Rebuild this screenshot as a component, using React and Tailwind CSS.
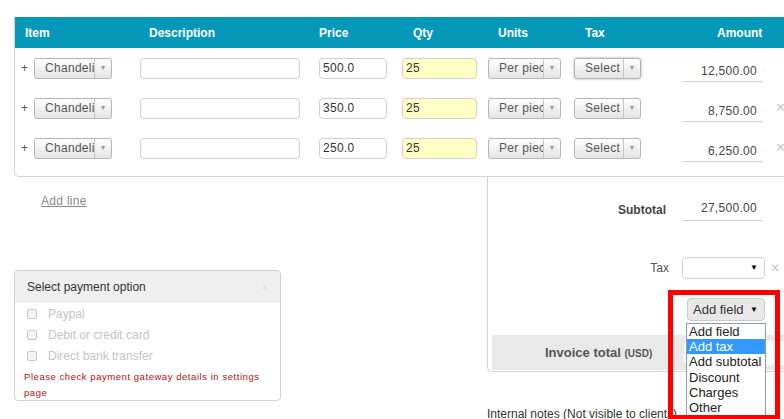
import React from "react";

const font = { fontFamily: '"Liberation Sans", Arial, sans-serif' };

function Combo({ label, width, focus }) {
  return (
    <div
      className={`flex h-[21px] flex-none items-stretch overflow-hidden rounded-[3px] border border-[#b4b4b4] bg-gradient-to-b from-white to-[#e4e4e4] ${width} ${focus ? "shadow-[0_0_3px_rgba(0,0,0,0.35)]" : ""}`}
    >
      <span className="flex-1 overflow-hidden whitespace-nowrap pl-[10px] text-[12px] leading-[19px] tracking-[0.3px] text-[#555]">{label}</span>
      <span className="flex w-[17px] flex-none items-center justify-center border-l border-[#c4c4c4] text-[7px] text-[#999]">▼</span>
    </div>
  );
}

function Field({ value, width, yellow }) {
  return (
    <div
      className={`h-[21px] flex-none rounded-[4px] border border-[#cfcfcf] pl-[3px] text-[12px] leading-[19px] tracking-[0.3px] text-[#333] ${width} ${yellow ? "bg-[#ffffc6]" : "bg-white"}`}
    >
      {value}
    </div>
  );
}

function Row({ price, amount, remove, focus }) {
  return (
    <div className="flex h-[40px] items-center">
      <span className="w-[19px] flex-none pl-[6px] text-[12px] text-[#555]">+</span>
      <Combo label="Chandeli" width="w-[78px]" />
      <div className="ml-[28px]"><Field value="" width="w-[160px]" /></div>
      <div className="ml-[19px]"><Field value={price} width="w-[68px]" /></div>
      <div className="ml-[15px]"><Field value="25" width="w-[75px]" yellow /></div>
      <div className="ml-[11px]"><Combo label="Per piec" width="w-[73px]" /></div>
      <div className="ml-[13px]"><Combo label="Select" width="w-[67px]" focus={focus} /></div>
      <div className="ml-[42px] mt-[6px] h-[22px] w-[80px] flex-none border-b border-[#cfcfcf] pr-[6px] text-right text-[12px] leading-[22px] tracking-[0.3px] text-[#444]">
        {amount}
      </div>
      <span className={`ml-[12px] text-[13px] text-[#c8c8c8] ${remove ? "" : "invisible"}`}>✕</span>
    </div>
  );
}

export default function App() {
  return (
    <div className="relative h-[419px] w-[784px] overflow-hidden bg-white" style={font}>
      <div className="pl-[14px] pt-[17px]">
        <div className="rounded-bl-[5px] border-b border-l border-[#d4d4d4] pb-[8px]">
          <div className="flex h-[31px] items-center bg-[#0598b8] text-[12px] font-bold text-white">
            <span className="ml-[10px] w-[124px]">Item</span>
            <span className="w-[170px]">Description</span>
            <span className="w-[94px]">Price</span>
            <span className="w-[85px]">Qty</span>
            <span className="w-[87px]">Units</span>
            <span className="w-[132px]">Tax</span>
            <span>Amount</span>
          </div>
          <Row price="500.0" amount="12,500.00" focus />
          <Row price="350.0" amount="8,750.00" remove />
          <Row price="250.0" amount="6,250.00" remove />
        </div>
      </div>

      <div className="flex">
        <div className="w-[487px] flex-none pl-[14px]">
          <div className="ml-[27px] mt-[17px] text-[12px] leading-[14px] tracking-[0.3px] text-[#888] underline">Add line</div>
          <div className="mt-[62px] h-[131px] w-[267px] overflow-hidden rounded-[4px] border border-[#d0d0d0]">
            <div className="flex h-[32px] items-center justify-between bg-[#efefef] pl-[12px] pr-[12px]">
              <span className="text-[12px] text-[#333]">Select payment option</span>
              <span className="text-[7px] text-[#ddd]">▲</span>
            </div>
            <div className="pl-[12px]">
              {["Paypal", "Debit or credit card", "Direct bank transfer"].map((t) => (
                <div key={t} className="flex h-[21px] items-center">
                  <span className="h-[10px] w-[10px] rounded-[2px] border border-[#c8c8c8] bg-[#f4f4f4]" />
                  <span className="ml-[11px] text-[12px] text-[#c4c4c4]">{t}</span>
                </div>
              ))}
              <p className="-ml-[3px] mt-[3px] text-[9.5px] leading-[16px] tracking-[0.55px] text-[#b01010]">
                Please check payment gateway details in settings page
              </p>
            </div>
          </div>
        </div>

        <div className="flex-1">
          <div className="h-[195px] rounded-bl-[5px] border-b border-l border-[#d4d4d4] pt-[22px]">
            <div className="flex h-[22px] items-center justify-end">
              <span className="mr-[17px] text-[12px] font-bold text-[#444]">Subtotal</span>
              <div className="mr-[21px] h-[22px] w-[80px] border-b border-[#cfcfcf] pr-[6px] text-right text-[12px] leading-[18px] tracking-[0.3px] text-[#444]">
                27,500.00
              </div>
            </div>
            <div className="mt-[36px] flex h-[22px] items-center justify-end">
              <span className="mr-[13px] text-[12px] text-[#555]">Tax</span>
              <div className="flex h-[22px] w-[83px] items-center justify-end rounded-[4px] border border-[#cfcfcf] bg-white pr-[6px] text-[8px] text-black">▼</div>
              <span className="ml-[5px] mr-[4px] text-[12px] text-[#c8c8c8]">✕</span>
            </div>
            <div className="mt-[19px] flex justify-end pr-[19px]">
              <div className="flex h-[23px] w-[78px] items-center justify-between rounded-[4px] border border-[#cacaca] bg-[#e8e8e8] pl-[5px] pr-[6px] text-[13px] text-[#333]">
                <span>Add field</span>
                <span className="text-[8px] text-black">▼</span>
              </div>
            </div>
            <div className="ml-[4px] mt-[14px] flex h-[35px] items-center bg-[#e9e9e9]">
              <span className="ml-[53px] text-[13px] font-bold text-[#555]">
                Invoice total <span className="text-[10px]">(USD)</span>
              </span>
              <div className="ml-[32px] h-[24px] flex-1 rounded-l-[5px] bg-white" />
            </div>
          </div>
          <div className="mt-[33px] text-[12px] text-[#333]">Internal notes (Not visible to clients)</div>
        </div>
      </div>

      <div className="absolute left-[686px] top-[323px] w-[80px] border border-[#8c9bb0] bg-white text-[13px] leading-[15.2px] text-[#222]">
        {["Add field", "Add tax", "Add subtotal", "Discount", "Charges", "Other"].map((o) => (
          <div key={o} className={`pl-[2px] ${o === "Add tax" ? "bg-[#3399ff] text-white" : ""}`}>{o}</div>
        ))}
      </div>
      <div className="pointer-events-none absolute left-[668px] top-[290px] h-[130px] w-[112px] border-[5px] border-[#ff0000]" />
    </div>
  );
}
